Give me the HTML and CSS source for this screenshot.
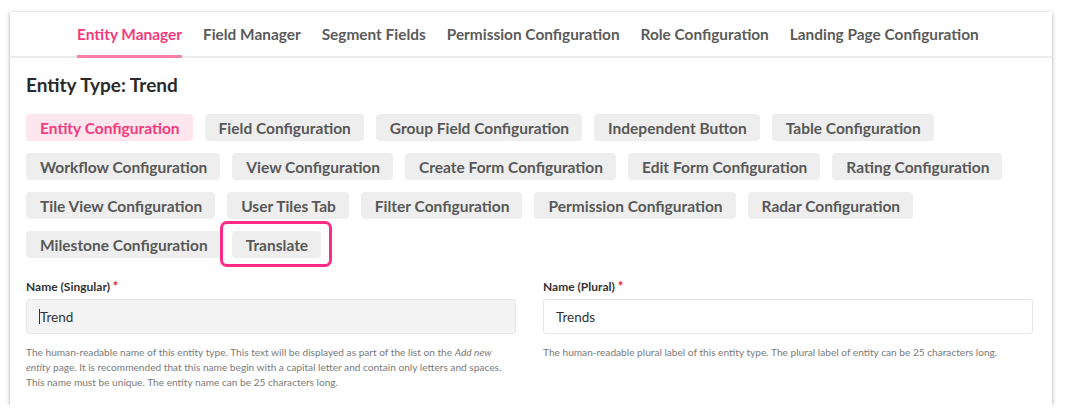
FILE: index.html
```html
<!DOCTYPE html>
<html lang="en">
<head>
<meta charset="utf-8">
<title>Entity Manager</title>
<link rel="stylesheet" href="styles.css">
</head>
<body>
<div class="card">
  <nav class="tabs">
    <a class="tab active">Entity Manager</a>
    <a class="tab">Field Manager</a>
    <a class="tab">Segment Fields</a>
    <a class="tab">Permission Configuration</a>
    <a class="tab">Role Configuration</a>
    <a class="tab">Landing Page Configuration</a>
  </nav>
  <div class="content">
    <h2 class="title">Entity Type: Trend</h2>
    <div class="pills">
      <div class="pill-row">
        <span class="pill active">Entity Configuration</span>
        <span class="pill">Field Configuration</span>
        <span class="pill">Group Field Configuration</span>
        <span class="pill">Independent Button</span>
        <span class="pill">Table Configuration</span>
      </div>
      <div class="pill-row">
        <span class="pill">Workflow Configuration</span>
        <span class="pill">View Configuration</span>
        <span class="pill">Create Form Configuration</span>
        <span class="pill">Edit Form Configuration</span>
        <span class="pill">Rating Configuration</span>
      </div>
      <div class="pill-row">
        <span class="pill">Tile View Configuration</span>
        <span class="pill">User Tiles Tab</span>
        <span class="pill">Filter Configuration</span>
        <span class="pill">Permission Configuration</span>
        <span class="pill">Radar Configuration</span>
      </div>
      <div class="pill-row">
        <span class="pill">Milestone Configuration</span>
        <span class="pill highlight">Translate</span>
      </div>
    </div>
    <div class="form">
      <div class="field">
        <label class="label">Name (Singular) <span class="req">*</span></label>
        <div class="input filled"><span class="caret"></span>Trend</div>
        <p class="help">The human-readable name of this entity type. This text will be displayed as part of the list on the <em>Add new</em> <em>entity</em> page. It is recommended that this name begin with a capital letter and contain only letters and spaces. This name must be unique. The entity name can be 25 characters long.</p>
      </div>
      <div class="field">
        <label class="label">Name (Plural) <span class="req">*</span></label>
        <div class="input">Trends</div>
        <p class="help">The human-readable plural label of this entity type. The plural label of entity can be 25 characters long.</p>
      </div>
    </div>
  </div>
</div>
</body>
</html>
```
FILE: styles.css
```css
* { box-sizing: border-box; }
html, body { margin: 0; padding: 0; background: #ffffff; }
body {
  font-family: "Lato", "Source Sans Pro", "Liberation Sans", sans-serif;
  color: #333;
}
.card {
  margin: 12px 13px 0 10px;
  height: 393px;
  background: #fff;
  box-shadow: 0 1px 4px rgba(0,0,0,0.35);
}
.tabs {
  display: flex;
  gap: 21px;
  height: 46px;
  padding-left: 67px;
  border-bottom: 2px solid #ececec;
  align-items: stretch;
}
.tab {
  display: flex;
  align-items: center;
  font-size: 15.4px;
  font-weight: 700;
  color: #5b5b5b;
  border-bottom: 3px solid transparent;
  margin-bottom: -2px;
  white-space: nowrap;
}
.tab.active { color: #f23a7d; border-bottom-color: #f97ea9; }
.content { padding: 0 20px 0 16px; }
.title {
  margin: 0;
  padding-top: 15px;
  font-size: 19px;
  font-weight: 700;
  color: #2a2a2a;
  line-height: 24px;
}
.pills {
  display: flex;
  flex-direction: column;
  gap: 12px;
  margin-top: 17px;
}
.pill-row {
  display: flex;
  gap: 12px;
}
.pill {
  position: relative;
  display: inline-flex;
  flex-shrink: 0;
  align-items: center;
  height: 27px;
  padding: 0 13px 0 14px;
  border-radius: 4px;
  background: #eeeeee;
  color: #585858;
  font-size: 15.5px;
  font-weight: 700;
  white-space: nowrap;
}
.pill.active { background: #fde6ee; color: #f23a7d; }
.pill.highlight { margin-left: -1px; }
.pill.highlight::after {
  content: "";
  position: absolute;
  top: -10px; bottom: -9px; left: -12px; right: -11px;
  border: 3px solid #ff2a86;
  border-radius: 7px;
}
.form {
  display: grid;
  grid-template-columns: 490px 490px;
  column-gap: 27px;
  margin-top: 20px;
}
.label {
  display: block;
  font-size: 12px;
  font-weight: 700;
  color: #333;
  line-height: 16px;
}
.req { color: #e41e2b; font-size: 13px; }
.input {
  display: flex;
  align-items: center;
  height: 35px;
  margin-top: 4px;
  padding: 0 12px;
  border: 1px solid #e2e7ec;
  border-radius: 3px;
  background: #fff;
  font-size: 13.5px;
  color: #333;
}
.input.filled { background: #f4f4f4; }
.caret {
  display: inline-block;
  width: 1px;
  height: 15px;
  background: #333;
}
.help {
  margin: 11px 0 0;
  font-size: 10.15px;
  line-height: 15px;
  color: #7a7a7a;
}
```
